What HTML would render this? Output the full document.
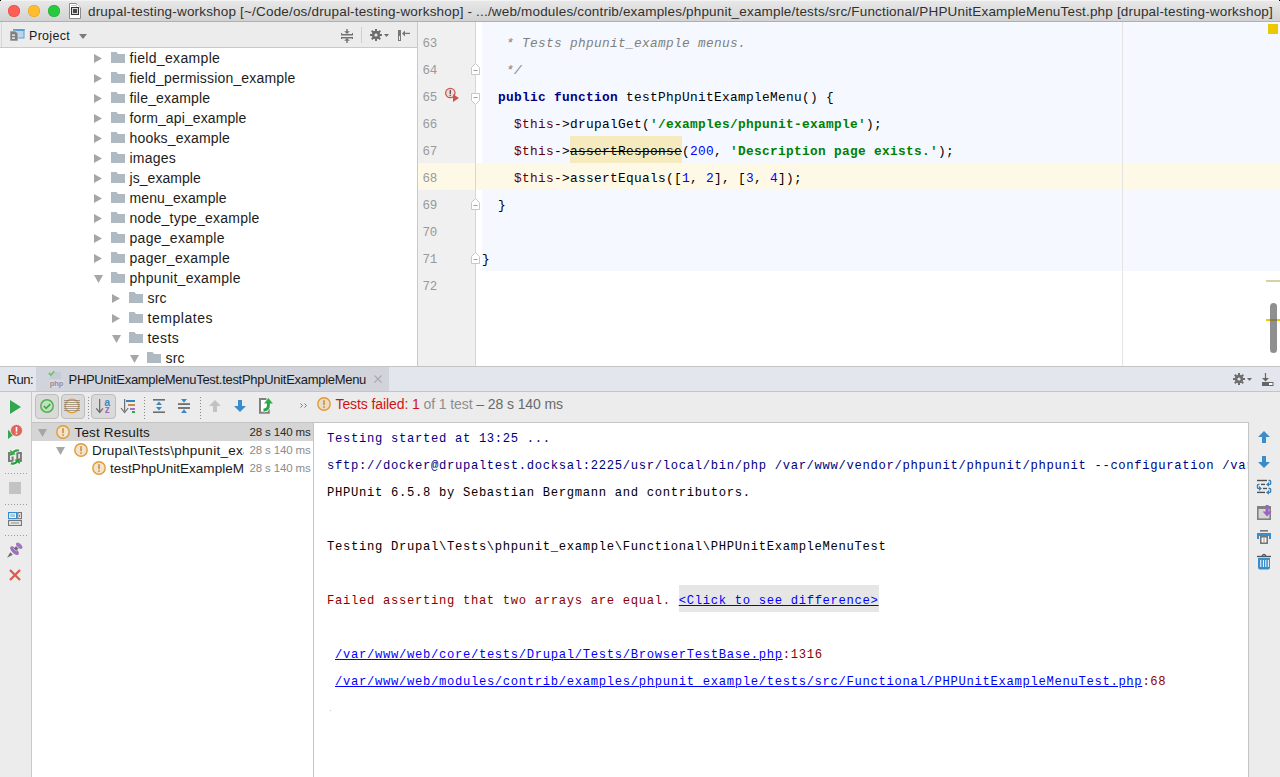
<!DOCTYPE html>
<html><head><meta charset="utf-8"><style>
*{box-sizing:border-box;margin:0;padding:0}
html,body{width:1280px;height:777px;overflow:hidden;background:#ececec;font-family:"Liberation Sans",sans-serif;color:#1a1a1a;position:relative}
.a{position:absolute}
svg{position:absolute;overflow:visible}
.mono{font-family:"Liberation Mono",monospace;white-space:pre}
.row{position:absolute;height:20px;line-height:20px;white-space:nowrap;color:#1c1c1c}
.ln{position:absolute;left:418px;width:19px;text-align:right;color:#999;font-family:"Liberation Mono",monospace;font-size:12.5px;letter-spacing:-0.3px;height:27px;line-height:32px}
.code{position:absolute;left:482px;height:27px;line-height:32px;color:#000;font-size:12.8px;letter-spacing:0.32px}
.cm{color:#808080;font-style:italic}
.kw{color:#000080;font-weight:bold}
.var{color:#660000}
.str{color:#008000;font-weight:bold}
.num{color:#0000ff}
.lnk{color:#0000ff;text-decoration:underline}
.cons{position:absolute;left:13px;height:27px;line-height:33px;color:#000;font-size:12.2px;letter-spacing:0.68px}
</style></head><body>
<div class="a" style="left:0px;top:0px;width:1280px;height:21px;background:linear-gradient(#e9e9e9,#d2d2d2);"></div>
<div class="a" style="left:0px;top:21px;width:1280px;height:1px;background:#b0b0b0;"></div>
<div class="a" style="left:0px;top:0px;width:1280px;height:1px;background:#f3f3f3;"></div>
<div class="a" style="left:0px;top:0px;width:1px;height:1px;background:#000;"></div>
<div class="a" style="left:1279px;top:0px;width:1px;height:1px;background:#000;"></div>
<div class="a" style="left:8px;top:5px;width:12px;height:12px;border-radius:50%;background:#fd5f57;box-shadow:inset 0 0 0 0.5px #e2463f"></div>
<div class="a" style="left:28px;top:5px;width:12px;height:12px;border-radius:50%;background:#febc2e;box-shadow:inset 0 0 0 0.5px #e1a116"></div>
<div class="a" style="left:48px;top:5px;width:12px;height:12px;border-radius:50%;background:#28c840;box-shadow:inset 0 0 0 0.5px #1aab29"></div>
<svg style="left:69px;top:3px" width="12" height="16" viewBox="0 0 12 16"><path d="M0.5 0.5H7.5L11.5 4.5V15.5H0.5Z" fill="#fff" stroke="#8c8c8c"/><path d="M7.5 0.5V4.5H11.5" fill="#fff" stroke="#c8c8c8" stroke-width="0.8"/><rect x="2" y="2" width="5" height="0.7" fill="#c0c0c0"/><rect x="2.5" y="4.5" width="7" height="7" fill="#d8d8d8" stroke="#333"/><rect x="4" y="6" width="4" height="4" fill="#484848"/></svg>
<div class="a" style="left:88px;top:1px;height:21px;line-height:21px;font-size:13.5px;color:#303030;white-space:pre;letter-spacing:0.178px">drupal-testing-workshop [~/Code/os/drupal-testing-workshop] - .../web/modules/contrib/examples/phpunit_example/tests/src/Functional/PHPUnitExampleMenuTest.php [drupal-testing-workshop]</div>
<div class="a" style="left:0px;top:22px;width:417px;height:25px;background:#ececec;"></div>
<div class="a" style="left:0px;top:47px;width:417px;height:1px;background:#c9c9c9;"></div>
<div class="a" style="left:1px;top:22px;width:1px;height:25px;background:#d6d6d6;"></div>
<svg style="left:10px;top:29px" width="15" height="13" viewBox="0 0 15 13"><rect x="3.5" y="0.5" width="10.5" height="8.5" fill="#b7d6ee" stroke="#5a9fd0"/><rect x="3" y="0" width="11.5" height="2" fill="#5a9fd0"/><path d="M0 2h5.5l2.5 2.5v7.5h-8z" fill="#808080" stroke="#ececec" stroke-width="0.6"/><rect x="2" y="5.5" width="3" height="1.2" fill="#fff"/><rect x="2" y="8.5" width="3" height="1.2" fill="#fff"/></svg>
<div class="a" style="left:29px;top:24px;height:25px;line-height:25px;font-size:12.5px;color:#1a1a1a;white-space:pre;letter-spacing:0.299px">Project</div>
<svg style="left:79px;top:34px" width="8" height="5" viewBox="0 0 8 5"><path d="M0 0h8l-4 5z" fill="#7a7a7a"/></svg>
<svg style="left:341px;top:29px" width="12" height="14" viewBox="0 0 12 14"><g fill="#727272"><rect x="0" y="5" width="12" height="1.5"/><rect x="0" y="8" width="12" height="1.5"/><rect x="5.3" y="0" width="1.4" height="4"/><path d="M3.2 2.3h5.6l-2.8 2.7z"/><rect x="5.3" y="10" width="1.4" height="4"/><path d="M3.2 11.7h5.6l-2.8-2.7z"/><rect x="0" y="4" width="1" height="2"/><rect x="11" y="4" width="1" height="2"/><rect x="0" y="8" width="1" height="2"/><rect x="11" y="8" width="1" height="2"/></g></svg>
<div class="a" style="left:361px;top:27px;width:1px;height:16px;background:#cfcfcf;"></div>
<svg style="left:370px;top:29px" width="20" height="12" viewBox="0 0 20 12"><g fill="#6e6e6e"><circle cx="6" cy="6" r="4.2"/><rect x="5" y="0" width="2" height="12"/><rect x="0" y="5" width="12" height="2"/><rect x="5" y="0" width="2" height="12" transform="rotate(45 6 6)"/><rect x="5" y="0" width="2" height="12" transform="rotate(-45 6 6)"/></g><circle cx="6" cy="6" r="1.6" fill="#ececec"/><path d="M14 5h5l-2.5 3z" fill="#6e6e6e"/></svg>
<svg style="left:398px;top:30px" width="12" height="11" viewBox="0 0 12 11"><rect x="0" y="0" width="3" height="11" fill="#777"/><rect x="1" y="6" width="1" height="4" fill="#ececec"/><rect x="5" y="2.75" width="7" height="1.3" fill="#777"/><path d="M4 3.4l3-3v6z" fill="#777"/></svg>
<div class="a" style="left:0px;top:48px;width:417px;height:318px;background:#fff;"></div>
<div class="a" style="left:0;top:48px;width:417px;height:318px;overflow:hidden">
<svg style="left:94px;top:6px" width="8" height="9" viewBox="0 0 8 9"><path d="M0 0l8 4.5-8 4.5z" fill="#a6a6a6"/></svg>
<svg style="left:111px;top:4px" width="14" height="11" viewBox="0 0 14 11"><path d="M0 0h5.5l1.5 2h7v9h-14z" fill="#aeb9c2"/></svg>
<div class="row" style="left:129.5px;top:0px;font-size:14px;letter-spacing:0.332px">field_example</div>
<svg style="left:94px;top:26px" width="8" height="9" viewBox="0 0 8 9"><path d="M0 0l8 4.5-8 4.5z" fill="#a6a6a6"/></svg>
<svg style="left:111px;top:24px" width="14" height="11" viewBox="0 0 14 11"><path d="M0 0h5.5l1.5 2h7v9h-14z" fill="#aeb9c2"/></svg>
<div class="row" style="left:129.5px;top:20px;font-size:14px;letter-spacing:0.172px">field_permission_example</div>
<svg style="left:94px;top:46px" width="8" height="9" viewBox="0 0 8 9"><path d="M0 0l8 4.5-8 4.5z" fill="#a6a6a6"/></svg>
<svg style="left:111px;top:44px" width="14" height="11" viewBox="0 0 14 11"><path d="M0 0h5.5l1.5 2h7v9h-14z" fill="#aeb9c2"/></svg>
<div class="row" style="left:129.5px;top:40px;font-size:14px;letter-spacing:0.183px">file_example</div>
<svg style="left:94px;top:66px" width="8" height="9" viewBox="0 0 8 9"><path d="M0 0l8 4.5-8 4.5z" fill="#a6a6a6"/></svg>
<svg style="left:111px;top:64px" width="14" height="11" viewBox="0 0 14 11"><path d="M0 0h5.5l1.5 2h7v9h-14z" fill="#aeb9c2"/></svg>
<div class="row" style="left:129.5px;top:60px;font-size:14px;letter-spacing:0.114px">form_api_example</div>
<svg style="left:94px;top:86px" width="8" height="9" viewBox="0 0 8 9"><path d="M0 0l8 4.5-8 4.5z" fill="#a6a6a6"/></svg>
<svg style="left:111px;top:84px" width="14" height="11" viewBox="0 0 14 11"><path d="M0 0h5.5l1.5 2h7v9h-14z" fill="#aeb9c2"/></svg>
<div class="row" style="left:129.5px;top:80px;font-size:14px;letter-spacing:0.188px">hooks_example</div>
<svg style="left:94px;top:106px" width="8" height="9" viewBox="0 0 8 9"><path d="M0 0l8 4.5-8 4.5z" fill="#a6a6a6"/></svg>
<svg style="left:111px;top:104px" width="14" height="11" viewBox="0 0 14 11"><path d="M0 0h5.5l1.5 2h7v9h-14z" fill="#aeb9c2"/></svg>
<div class="row" style="left:129.5px;top:100px;font-size:14px;letter-spacing:0.211px">images</div>
<svg style="left:94px;top:126px" width="8" height="9" viewBox="0 0 8 9"><path d="M0 0l8 4.5-8 4.5z" fill="#a6a6a6"/></svg>
<svg style="left:111px;top:124px" width="14" height="11" viewBox="0 0 14 11"><path d="M0 0h5.5l1.5 2h7v9h-14z" fill="#aeb9c2"/></svg>
<div class="row" style="left:129.5px;top:120px;font-size:14px;letter-spacing:0.049px">js_example</div>
<svg style="left:94px;top:146px" width="8" height="9" viewBox="0 0 8 9"><path d="M0 0l8 4.5-8 4.5z" fill="#a6a6a6"/></svg>
<svg style="left:111px;top:144px" width="14" height="11" viewBox="0 0 14 11"><path d="M0 0h5.5l1.5 2h7v9h-14z" fill="#aeb9c2"/></svg>
<div class="row" style="left:129.5px;top:140px;font-size:14px;letter-spacing:0.123px">menu_example</div>
<svg style="left:94px;top:166px" width="8" height="9" viewBox="0 0 8 9"><path d="M0 0l8 4.5-8 4.5z" fill="#a6a6a6"/></svg>
<svg style="left:111px;top:164px" width="14" height="11" viewBox="0 0 14 11"><path d="M0 0h5.5l1.5 2h7v9h-14z" fill="#aeb9c2"/></svg>
<div class="row" style="left:129.5px;top:160px;font-size:14px;letter-spacing:0.23px">node_type_example</div>
<svg style="left:94px;top:186px" width="8" height="9" viewBox="0 0 8 9"><path d="M0 0l8 4.5-8 4.5z" fill="#a6a6a6"/></svg>
<svg style="left:111px;top:184px" width="14" height="11" viewBox="0 0 14 11"><path d="M0 0h5.5l1.5 2h7v9h-14z" fill="#aeb9c2"/></svg>
<div class="row" style="left:129.5px;top:180px;font-size:14px;letter-spacing:0.288px">page_example</div>
<svg style="left:94px;top:206px" width="8" height="9" viewBox="0 0 8 9"><path d="M0 0l8 4.5-8 4.5z" fill="#a6a6a6"/></svg>
<svg style="left:111px;top:204px" width="14" height="11" viewBox="0 0 14 11"><path d="M0 0h5.5l1.5 2h7v9h-14z" fill="#aeb9c2"/></svg>
<div class="row" style="left:129.5px;top:200px;font-size:14px;letter-spacing:0.307px">pager_example</div>
<svg style="left:94px;top:227px" width="9" height="8" viewBox="0 0 9 8"><path d="M0 0h9l-4.5 8z" fill="#a6a6a6"/></svg>
<svg style="left:111px;top:224px" width="14" height="11" viewBox="0 0 14 11"><path d="M0 0h5.5l1.5 2h7v9h-14z" fill="#aeb9c2"/></svg>
<div class="row" style="left:129.5px;top:220px;font-size:14px;letter-spacing:0.311px">phpunit_example</div>
<svg style="left:112px;top:246px" width="8" height="9" viewBox="0 0 8 9"><path d="M0 0l8 4.5-8 4.5z" fill="#a6a6a6"/></svg>
<svg style="left:129px;top:244px" width="14" height="11" viewBox="0 0 14 11"><path d="M0 0h5.5l1.5 2h7v9h-14z" fill="#aeb9c2"/></svg>
<div class="row" style="left:147.5px;top:240px;font-size:14px;letter-spacing:0.179px">src</div>
<svg style="left:112px;top:266px" width="8" height="9" viewBox="0 0 8 9"><path d="M0 0l8 4.5-8 4.5z" fill="#a6a6a6"/></svg>
<svg style="left:129px;top:264px" width="14" height="11" viewBox="0 0 14 11"><path d="M0 0h5.5l1.5 2h7v9h-14z" fill="#aeb9c2"/></svg>
<div class="row" style="left:147.5px;top:260px;font-size:14px;letter-spacing:0.534px">templates</div>
<svg style="left:112px;top:287px" width="9" height="8" viewBox="0 0 9 8"><path d="M0 0h9l-4.5 8z" fill="#a6a6a6"/></svg>
<svg style="left:129px;top:284px" width="14" height="11" viewBox="0 0 14 11"><path d="M0 0h5.5l1.5 2h7v9h-14z" fill="#aeb9c2"/></svg>
<div class="row" style="left:147.5px;top:280px;font-size:14px;letter-spacing:0.427px">tests</div>
<svg style="left:130px;top:307px" width="9" height="8" viewBox="0 0 9 8"><path d="M0 0h9l-4.5 8z" fill="#a6a6a6"/></svg>
<svg style="left:147px;top:304px" width="14" height="11" viewBox="0 0 14 11"><path d="M0 0h5.5l1.5 2h7v9h-14z" fill="#aeb9c2"/></svg>
<div class="row" style="left:165.5px;top:300px;font-size:14px;letter-spacing:0.213px">src</div>
</div>
<div class="a" style="left:417px;top:22px;width:1px;height:344px;background:#c9c9c9;"></div>
<div class="a" style="left:418px;top:22px;width:57px;height:344px;background:#f0f0f0;"></div>
<div class="a" style="left:476px;top:22px;width:804px;height:344px;background:#fff;"></div>
<div class="a" style="left:482px;top:22px;width:798px;height:249px;background:#f5f8fe;"></div>
<div class="a" style="left:418px;top:163px;width:862px;height:27px;background:#fef9e6;"></div>
<div class="a" style="left:475px;top:22px;width:1px;height:344px;background:#d6d6d6;"></div>
<div class="a" style="left:570px;top:136px;width:112px;height:27px;background:#f5ebbf;"></div>
<div class="a" style="left:1122px;top:22px;width:1px;height:344px;background:#e3e3e3;"></div>
<div class="a" style="left:0;top:22px;width:1280px;height:344px;overflow:hidden">
<div class="ln" style="top:6px">63</div>
<div class="code mono" style="top:6px">   <span class="cm">* Tests phpunit_example menus.</span></div>
<div class="ln" style="top:33px">64</div>
<div class="code mono" style="top:33px">   <span class="cm">*/</span></div>
<div class="ln" style="top:60px">65</div>
<div class="code mono" style="top:60px">  <span class="kw">public function</span> testPhpUnitExampleMenu() {</div>
<div class="ln" style="top:87px">66</div>
<div class="code mono" style="top:87px">    <span class="var">$this</span>-&gt;drupalGet(<span class="str">'/examples/phpunit-example'</span>);</div>
<div class="ln" style="top:114px">67</div>
<div class="code mono" style="top:114px">    <span class="var">$this</span>-&gt;<s>assertResponse</s>(<span class="num">200</span>, <span class="str">'Description page exists.'</span>);</div>
<div class="ln" style="top:141px">68</div>
<div class="code mono" style="top:141px">    <span class="var">$this</span>-&gt;assertEquals([<span class="num">1</span>, <span class="num">2</span>], [<span class="num">3</span>, <span class="num">4</span>]);</div>
<div class="ln" style="top:168px">69</div>
<div class="code mono" style="top:168px">  }</div>
<div class="ln" style="top:195px">70</div>
<div class="code mono" style="top:195px"></div>
<div class="ln" style="top:222px">71</div>
<div class="code mono" style="top:222px">}</div>
<div class="ln" style="top:249px">72</div>
<div class="code mono" style="top:249px"></div>
<svg style="left:471px;top:41px" width="9" height="12" viewBox="0 0 9 12"><path d="M0.5 11.5v-7l4-4 4 4v7z" fill="#fff" stroke="#c8c8c8"/><rect x="2.5" y="7" width="4" height="1" fill="#a0a0a0"/></svg>
<svg style="left:471px;top:71px" width="9" height="12" viewBox="0 0 9 12"><path d="M0.5 0.5h8v7l-4 4-4-4z" fill="#fff" stroke="#c8c8c8"/><rect x="2.5" y="4" width="4" height="1" fill="#a0a0a0"/></svg>
<svg style="left:471px;top:176px" width="9" height="12" viewBox="0 0 9 12"><path d="M0.5 11.5v-7l4-4 4 4v7z" fill="#fff" stroke="#c8c8c8"/><rect x="2.5" y="7" width="4" height="1" fill="#a0a0a0"/></svg>
<svg style="left:471px;top:230px" width="9" height="12" viewBox="0 0 9 12"><path d="M0.5 11.5v-7l4-4 4 4v7z" fill="#fff" stroke="#c8c8c8"/><rect x="2.5" y="7" width="4" height="1" fill="#a0a0a0"/></svg>
<svg style="left:445px;top:65px" width="15" height="16" viewBox="0 0 15 16"><circle cx="5.3" cy="6" r="4.7" fill="#f1d9d6" stroke="#c9564b" stroke-width="1.2"/><rect x="4.6" y="3" width="1.3" height="4" fill="#555"/><rect x="4.6" y="7.8" width="1.3" height="1.3" fill="#555"/><path d="M8 7.2L14 11 8 15z" fill="#c9564b"/></svg>
</div>
<div class="a" style="left:1268px;top:24px;width:10px;height:10px;background:#ecc800;"></div>
<div class="a" style="left:1266px;top:280px;width:14px;height:2px;background:#d9cfa9;"></div>
<div class="a" style="left:1266px;top:319px;width:14px;height:2px;background:#ecc800;"></div>
<div class="a" style="left:1270px;top:303px;width:7px;height:50px;background:rgba(90,90,90,0.68);border-radius:4px"></div>
<div class="a" style="left:0px;top:366px;width:1280px;height:1px;background:#c4c4c4;"></div>
<div class="a" style="left:0px;top:367px;width:1280px;height:24px;background:#e3e6ec;"></div>
<div class="a" style="left:36px;top:367px;width:353px;height:24px;background:#d1d4da;"></div>
<div class="a" style="left:0px;top:391px;width:1280px;height:1px;background:#c4c4c4;"></div>
<div class="a" style="left:7.5px;top:367px;height:24px;line-height:24px;font-size:13px;color:#1a1a1a;white-space:pre;letter-spacing:-0.49px;line-height:25px">Run:</div>
<svg style="left:48px;top:370px" width="16" height="18" viewBox="0 0 16 18"><rect x="2" y="2" width="11" height="7" fill="#c4ccd4"/><path d="M0.8 3l2 2.2 3.5-4" fill="none" stroke="#6ac259" stroke-width="1.5"/><rect x="1" y="10" width="15" height="7" fill="#dcd6ea"/><text x="8.5" y="16" font-size="7.5" text-anchor="middle" fill="#8f8f8f" font-family="Liberation Sans" font-weight="bold">php</text></svg>
<div class="a" style="left:68.5px;top:367px;height:24px;line-height:24px;font-size:13px;color:#1a1a1a;white-space:pre;letter-spacing:-0.293px;line-height:25px">PHPUnitExampleMenuTest.testPhpUnitExampleMenu</div>
<svg style="left:374px;top:375px" width="8" height="8" viewBox="0 0 8 8"><path d="M0.5 0.5l7 7M7.5 0.5l-7 7" stroke="#aaaaaa" stroke-width="1.1"/></svg>
<svg style="left:1233px;top:373px" width="20" height="12" viewBox="0 0 20 12"><g fill="#6e6e6e"><circle cx="6" cy="6" r="4.2"/><rect x="5" y="0" width="2" height="12"/><rect x="0" y="5" width="12" height="2"/><rect x="5" y="0" width="2" height="12" transform="rotate(45 6 6)"/><rect x="5" y="0" width="2" height="12" transform="rotate(-45 6 6)"/></g><circle cx="6" cy="6" r="1.6" fill="#e3e6ec"/><path d="M14 5h5l-2.5 3z" fill="#6e6e6e"/></svg>
<svg style="left:1262px;top:373px" width="12" height="13" viewBox="0 0 12 13"><rect x="2.9" y="0" width="1.2" height="7" fill="#666"/><path d="M0 5h7l-3.5 3.5z" fill="#666"/><rect x="0.5" y="9.5" width="10.5" height="3" fill="#fff" stroke="#666"/><rect x="1" y="10" width="6" height="2" fill="#666"/></svg>
<div class="a" style="left:0px;top:392px;width:1280px;height:30px;background:#ececec;"></div>
<div class="a" style="left:0px;top:422px;width:1280px;height:355px;background:#ececec;"></div>
<div class="a" style="left:31px;top:392px;width:1px;height:385px;background:#c9c9c9;"></div>
<div class="a" style="left:32px;top:422px;width:1216px;height:1px;background:#c4c4c4;"></div>
<div class="a" style="left:35px;top:394px;width:24px;height:25px;background:#dadada;border:1px solid #bdbdbd;border-radius:4px"></div>
<div class="a" style="left:60.5px;top:394px;width:24px;height:25px;background:#dadada;border:1px solid #bdbdbd;border-radius:4px"></div>
<div class="a" style="left:91px;top:394px;width:25px;height:25px;background:#dadada;border:1px solid #bdbdbd;border-radius:4px"></div>
<svg style="left:40px;top:399px" width="14" height="14" viewBox="0 0 14 14"><circle cx="7" cy="7" r="6.2" fill="#c5dfc5" stroke="#4fb350" stroke-width="1.5"/><path d="M3.8 7l2.3 2.4 4.2-4.3" fill="none" stroke="#3ea93f" stroke-width="1.6"/></svg>
<svg style="left:64px;top:398px" width="16" height="16" viewBox="0 0 16 16"><circle cx="8" cy="8" r="6.8" fill="#f3e6d0" stroke="#e8a33a" stroke-width="1.5"/><g fill="#7d6e5c" opacity="0.6"><rect x="0" y="2" width="16" height="1"/><rect x="0" y="4" width="16" height="1"/><rect x="0" y="6" width="16" height="1"/><rect x="0" y="8" width="16" height="1"/><rect x="0" y="10" width="16" height="1"/><rect x="0" y="12" width="16" height="1"/></g></svg>
<svg style="left:88px;top:397px" width="1" height="24" viewBox="0 0 1 24"><rect x="0" y="0" width="1" height="1" fill="#8a8a8a"/><rect x="0" y="3" width="1" height="1" fill="#8a8a8a"/><rect x="0" y="6" width="1" height="1" fill="#8a8a8a"/><rect x="0" y="9" width="1" height="1" fill="#8a8a8a"/><rect x="0" y="12" width="1" height="1" fill="#8a8a8a"/><rect x="0" y="15" width="1" height="1" fill="#8a8a8a"/><rect x="0" y="18" width="1" height="1" fill="#8a8a8a"/><rect x="0" y="21" width="1" height="1" fill="#8a8a8a"/></svg>
<svg style="left:96px;top:399px" width="14" height="15" viewBox="0 0 14 15"><rect x="3" y="0" width="1.3" height="13" fill="#6e6e6e"/><path d="M0.3 9.3l3.35 4.2 3.35-4.2" fill="none" stroke="#6e6e6e" stroke-width="1.3"/><text x="11.2" y="7" font-size="10.5" text-anchor="middle" fill="#3a88c4" font-family="Liberation Sans" font-weight="bold">a</text><text x="11.2" y="14.3" font-size="10" text-anchor="middle" fill="#9a6cc0" font-family="Liberation Sans" font-weight="bold">z</text></svg>
<svg style="left:121px;top:399px" width="15" height="14" viewBox="0 0 15 14"><rect x="3" y="0" width="1.2" height="12" fill="#6e6e6e"/><path d="M0 9l3.6 4.5 3.6-4.5" fill="none" stroke="#6e6e6e" stroke-width="1.2"/><rect x="5" y="1" width="9" height="2" fill="#3a80bb"/><rect x="7" y="5" width="7" height="2" fill="#c98d43"/><rect x="9" y="9" width="5" height="2" fill="#a46fcb"/><rect x="11" y="12" width="3" height="2" fill="#2eaa4a"/></svg>
<svg style="left:144px;top:397px" width="1" height="24" viewBox="0 0 1 24"><rect x="0" y="0" width="1" height="1" fill="#8a8a8a"/><rect x="0" y="3" width="1" height="1" fill="#8a8a8a"/><rect x="0" y="6" width="1" height="1" fill="#8a8a8a"/><rect x="0" y="9" width="1" height="1" fill="#8a8a8a"/><rect x="0" y="12" width="1" height="1" fill="#8a8a8a"/><rect x="0" y="15" width="1" height="1" fill="#8a8a8a"/><rect x="0" y="18" width="1" height="1" fill="#8a8a8a"/><rect x="0" y="21" width="1" height="1" fill="#8a8a8a"/></svg>
<svg style="left:153px;top:399px" width="12" height="14" viewBox="0 0 12 14"><rect x="0" y="0" width="12" height="1.6" fill="#6e6e6e"/><rect x="0" y="12.4" width="12" height="1.6" fill="#6e6e6e"/><path d="M3 6h6l-3-3.6z" fill="#3a89c5"/><path d="M3 8h6l-3 3.6z" fill="#3a89c5"/></svg>
<svg style="left:178px;top:399px" width="12" height="14" viewBox="0 0 12 14"><rect x="0" y="4.2" width="12" height="1.8" fill="#6e6e6e"/><rect x="0" y="8.1" width="12" height="1.8" fill="#6e6e6e"/><path d="M3 0h6l-3 3.8z" fill="#3a89c5"/><path d="M3 14h6l-3-3.8z" fill="#3a89c5"/></svg>
<svg style="left:200px;top:397px" width="1" height="24" viewBox="0 0 1 24"><rect x="0" y="0" width="1" height="1" fill="#8a8a8a"/><rect x="0" y="3" width="1" height="1" fill="#8a8a8a"/><rect x="0" y="6" width="1" height="1" fill="#8a8a8a"/><rect x="0" y="9" width="1" height="1" fill="#8a8a8a"/><rect x="0" y="12" width="1" height="1" fill="#8a8a8a"/><rect x="0" y="15" width="1" height="1" fill="#8a8a8a"/><rect x="0" y="18" width="1" height="1" fill="#8a8a8a"/><rect x="0" y="21" width="1" height="1" fill="#8a8a8a"/></svg>
<svg style="left:209px;top:400px" width="12" height="12" viewBox="0 0 12 12"><path d="M6 0l6 6h-4v6h-4v-6h-4z" fill="#c2c2c2"/></svg>
<svg style="left:234px;top:400px" width="12" height="12" viewBox="0 0 12 12" transform="rotate(180)"><path d="M6 0l6 6h-4v6h-4v-6h-4z" fill="#3a8ccb"/></svg>
<svg style="left:259px;top:398px" width="15" height="16" viewBox="0 0 15 16"><rect x="1" y="1" width="9.8" height="13.8" fill="#fff"/><path d="M1 15.8V1H7.5M9.8 10.5V14.8H1" fill="none" stroke="#808080" stroke-width="2"/><path d="M9.4 4V7.5Q9.4 11.6 4.5 12.2" fill="none" stroke="#fff" stroke-width="4.5"/><path d="M5 5.6L9.4 0 13.9 5.6z" fill="#2fae4a"/><path d="M9.4 4V7.5Q9.4 11.6 4.5 12.2" fill="none" stroke="#2aa745" stroke-width="3"/></svg>
<svg style="left:300px;top:403px" width="8" height="5" viewBox="0 0 8 5"><path d="M0.5 0.5l2 2-2 2M4.5 0.5l2 2-2 2" fill="none" stroke="#777" stroke-width="1"/></svg>
<svg style="left:317px;top:397px" width="14" height="14" viewBox="0 0 14 14"><circle cx="7" cy="7" r="6.2" fill="#ecdcc6" stroke="#e09b34" stroke-width="1.4"/><rect x="6.2" y="3.2" width="1.6" height="5" fill="#c29245"/><rect x="6.2" y="9.3" width="1.6" height="1.6" fill="#c29245"/></svg>
<div class="a" style="left:335.5px;top:389px;height:30px;line-height:31px;font-size:14px;white-space:pre;letter-spacing:-0.093px"><span style="color:#cc1414">Tests failed: 1</span><span style="color:#8e8e8e"> of 1 test</span><span style="color:#6a6a6a"> – 28 s 140 ms</span></div>
<svg style="left:10px;top:400px" width="11" height="14" viewBox="0 0 11 14"><path d="M0 0l11 7-11 7z" fill="#2fa84f"/></svg>
<svg style="left:8px;top:424px" width="14" height="16" viewBox="0 0 14 16"><path d="M0 6l6 4.5-6 4.5z" fill="#2fa84f"/><circle cx="8.5" cy="6.5" r="6" fill="#e2655c" stroke="#ececec" stroke-width="0.8"/><rect x="7.7" y="3" width="1.6" height="4.6" fill="#fff"/><rect x="7.7" y="8.6" width="1.6" height="1.6" fill="#fff"/></svg>
<svg style="left:8px;top:449px" width="14" height="16" viewBox="0 0 14 16"><path d="M1 3V12H4.6V7.5M9.3 10V4H12.9V13" fill="none" stroke="#7a7a7a" stroke-width="2"/><path d="M11 1.6Q6.5 0.5 4.5 4.5" fill="none" stroke="#fff" stroke-width="3.6"/><path d="M11 1.6Q6.5 0.5 4.5 4.5" fill="none" stroke="#35a94a" stroke-width="2.2"/><path d="M2 6.8L2.3 0.8 7.6 5.2z" fill="#35a94a"/><path d="M3 14.4Q7.5 15.5 9.5 11.5" fill="none" stroke="#fff" stroke-width="3.6"/><path d="M3 14.4Q7.5 15.5 9.5 11.5" fill="none" stroke="#2a9e3f" stroke-width="2.2"/><path d="M12 9.2L11.7 15.2 6.4 10.8z" fill="#2a9e3f"/></svg>
<svg style="left:5px;top:473px" width="24" height="1" viewBox="0 0 24 1"><rect x="0" y="0" width="1" height="1" fill="#9a9a9a"/><rect x="3" y="0" width="1" height="1" fill="#9a9a9a"/><rect x="6" y="0" width="1" height="1" fill="#9a9a9a"/><rect x="9" y="0" width="1" height="1" fill="#9a9a9a"/><rect x="12" y="0" width="1" height="1" fill="#9a9a9a"/><rect x="15" y="0" width="1" height="1" fill="#9a9a9a"/><rect x="18" y="0" width="1" height="1" fill="#9a9a9a"/><rect x="21" y="0" width="1" height="1" fill="#9a9a9a"/></svg>
<div class="a" style="left:9px;top:482px;width:12px;height:12px;background:#c3c3c3;"></div>
<svg style="left:5px;top:504px" width="24" height="1" viewBox="0 0 24 1"><rect x="0" y="0" width="1" height="1" fill="#9a9a9a"/><rect x="3" y="0" width="1" height="1" fill="#9a9a9a"/><rect x="6" y="0" width="1" height="1" fill="#9a9a9a"/><rect x="9" y="0" width="1" height="1" fill="#9a9a9a"/><rect x="12" y="0" width="1" height="1" fill="#9a9a9a"/><rect x="15" y="0" width="1" height="1" fill="#9a9a9a"/><rect x="18" y="0" width="1" height="1" fill="#9a9a9a"/><rect x="21" y="0" width="1" height="1" fill="#9a9a9a"/></svg>
<svg style="left:8px;top:512px" width="14" height="14" viewBox="0 0 14 14"><rect x="0.6" y="0.6" width="8" height="6" fill="#fff" stroke="#3a8ccb" stroke-width="1.2"/><rect x="2.2" y="2.2" width="4.8" height="2.8" fill="#9ccbea"/><rect x="9.8" y="0.6" width="3.6" height="6" fill="#fff" stroke="#777" stroke-width="1.2"/><rect x="11.1" y="2.5" width="1" height="2.5" fill="#777"/><rect x="0.6" y="8.6" width="12.8" height="4.8" fill="#fff" stroke="#777" stroke-width="1.2"/><rect x="2.5" y="10.5" width="9" height="1" fill="#777"/></svg>
<svg style="left:5px;top:535px" width="24" height="1" viewBox="0 0 24 1"><rect x="0" y="0" width="1" height="1" fill="#9a9a9a"/><rect x="3" y="0" width="1" height="1" fill="#9a9a9a"/><rect x="6" y="0" width="1" height="1" fill="#9a9a9a"/><rect x="9" y="0" width="1" height="1" fill="#9a9a9a"/><rect x="12" y="0" width="1" height="1" fill="#9a9a9a"/><rect x="15" y="0" width="1" height="1" fill="#9a9a9a"/><rect x="18" y="0" width="1" height="1" fill="#9a9a9a"/><rect x="21" y="0" width="1" height="1" fill="#9a9a9a"/></svg>
<svg style="left:6px;top:541px" width="17" height="18" viewBox="0 0 17 18"><path d="M1.1 16.7L4.3 11.2 6.8 13.7z" fill="#6e6e6e"/><ellipse cx="8.5" cy="9.6" rx="5.6" ry="2.6" transform="rotate(45 8.5 9.6)" fill="#9c6cc2"/><ellipse cx="13.2" cy="4.8" rx="3.9" ry="2.1" transform="rotate(45 13.2 4.8)" fill="#a274c6"/><rect x="8.2" y="5.6" width="3.8" height="3.8" transform="rotate(45 10.1 7.5)" fill="#6e6e6e" stroke="#ececec" stroke-width="0.6"/></svg>
<svg style="left:9px;top:569px" width="12" height="12" viewBox="0 0 12 12"><path d="M1 1l10 10M11 1l-10 10" stroke="#e0584c" stroke-width="2.2"/></svg>
<svg style="left:1258px;top:431px" width="12" height="12" viewBox="0 0 12 12"><path d="M6 0l6 6h-4v6h-4v-6h-4z" fill="#3a8ccb"/></svg>
<svg style="left:1258px;top:456px" width="12" height="12" viewBox="0 0 12 12"><path d="M6 12l6-6h-4v-6h-4v6h-4z" fill="#3a8ccb"/></svg>
<svg style="left:1256px;top:479px" width="16" height="18" viewBox="0 0 16 18"><g fill="#505050"><rect x="1" y="0.8" width="10" height="1.4"/><rect x="5" y="4.7" width="4" height="1.4"/><rect x="7" y="8.8" width="4" height="1.4"/><rect x="1" y="12.7" width="8" height="1.4"/></g><g fill="none" stroke="#3580b8" stroke-width="1.4"><path d="M12.5 1.5H13.6Q14.6 1.5 14.6 2.5V4.4Q14.6 5.4 13.6 5.4H12"/><path d="M3.5 5.4H2.5Q1.5 5.4 1.5 6.4V8.5Q1.5 9.5 2.5 9.5H4"/><path d="M12.5 9.5H13.6Q14.6 9.5 14.6 10.5V12.4Q14.6 13.4 13.6 13.4H12"/></g><g fill="#3580b8"><path d="M10 5.4L13 3 13 7.8z"/><path d="M6 9.5L3 7.1 3 11.9z"/><path d="M10 13.4L13 11 13 15.8z"/></g></svg>
<svg style="left:1257px;top:505px" width="15" height="15" viewBox="0 0 15 15"><rect x="0.8" y="1.8" width="12.4" height="12.4" fill="#d6d6d6" stroke="#808080" stroke-width="1.6"/><rect x="0" y="1" width="14" height="3" fill="#808080"/><rect x="8.6" y="0" width="3" height="7" fill="#9b62bf"/><path d="M5.6 6.5h9l-4.5 5z" fill="#9b62bf"/></svg>
<svg style="left:1257px;top:530px" width="14" height="14" viewBox="0 0 14 14"><rect x="3" y="0" width="8" height="1.6" fill="#777"/><path d="M0 3h14v6h-2v-3h-10v3h-2z" fill="#3a8ccb"/><rect x="3.8" y="6.8" width="6.4" height="6.4" fill="#fff" stroke="#777" stroke-width="1.6"/><rect x="6.2" y="8.5" width="1.6" height="1" fill="#777"/><rect x="6.2" y="10.5" width="1.6" height="1" fill="#777"/></svg>
<svg style="left:1257px;top:553px" width="14" height="17" viewBox="0 0 14 17"><path d="M0 3.5h14" stroke="#555" stroke-width="1.4"/><path d="M5 2.8q2-2.6 4 0" fill="none" stroke="#555" stroke-width="1.3"/><path d="M1 5h12v9.5q0 2-2 2h-8q-2 0-2-2z" fill="#3a8ccb"/><g fill="#fff"><rect x="3.3" y="7" width="1" height="7"/><rect x="5.9" y="7" width="1" height="7"/><rect x="8.3" y="7" width="1" height="7"/><rect x="10.8" y="7" width="1" height="7"/></g></svg>
<div class="a" style="left:32px;top:423px;width:281px;height:354px;background:#fff;"></div>
<div class="a" style="left:32px;top:423px;width:281px;height:18px;background:#d5d5d5;"></div>
<div class="a" style="left:313px;top:422px;width:1px;height:355px;background:#c4c4c4;"></div>
<div class="a" style="left:314px;top:423px;width:934px;height:354px;background:#fff;"></div>
<div class="a" style="left:1248px;top:422px;width:1px;height:355px;background:#c4c4c4;"></div>
<svg style="left:38px;top:429px" width="9" height="8" viewBox="0 0 9 8"><path d="M0 0h9l-4.5 8z" fill="#a6a6a6"/></svg>
<svg style="left:56px;top:425px" width="14" height="14" viewBox="0 0 14 14"><circle cx="7" cy="7" r="6.2" fill="#f2e3cf" stroke="#e09b34" stroke-width="1.4"/><rect x="6.2" y="3.2" width="1.6" height="5" fill="#c29245"/><rect x="6.2" y="9.3" width="1.6" height="1.6" fill="#c29245"/></svg>
<div class="a" style="left:74.5px;top:423px;height:18px;line-height:18px;font-size:13.5px;color:#1a1a1a;white-space:pre;letter-spacing:0.165px;line-height:19px">Test Results</div>
<div class="a" style="left:249.5px;top:423px;height:18px;line-height:18px;font-size:11.5px;color:#2a2a2a;white-space:pre;letter-spacing:-0.149px;line-height:19px">28 s 140 ms</div>
<svg style="left:56px;top:447px" width="9" height="8" viewBox="0 0 9 8"><path d="M0 0h9l-4.5 8z" fill="#a6a6a6"/></svg>
<svg style="left:74px;top:443px" width="14" height="14" viewBox="0 0 14 14"><circle cx="7" cy="7" r="6.2" fill="#f2e3cf" stroke="#e09b34" stroke-width="1.4"/><rect x="6.2" y="3.2" width="1.6" height="5" fill="#c29245"/><rect x="6.2" y="9.3" width="1.6" height="1.6" fill="#c29245"/></svg>
<div class="a" style="left:92px;top:441px;width:152px;height:18px;overflow:hidden;white-space:nowrap;font-size:13.5px;line-height:19px;color:#1a1a1a;letter-spacing:0.268px">Drupal\Tests\phpunit_example\Functional</div>
<div class="a" style="left:249.5px;top:441px;height:18px;line-height:18px;font-size:11.5px;color:#8c8c8c;white-space:pre;letter-spacing:-0.149px;line-height:19px">28 s 140 ms</div>
<svg style="left:92px;top:461px" width="14" height="14" viewBox="0 0 14 14"><circle cx="7" cy="7" r="6.2" fill="#f2e3cf" stroke="#e09b34" stroke-width="1.4"/><rect x="6.2" y="3.2" width="1.6" height="5" fill="#c29245"/><rect x="6.2" y="9.3" width="1.6" height="1.6" fill="#c29245"/></svg>
<div class="a" style="left:110px;top:459px;width:134px;height:18px;overflow:hidden;white-space:nowrap;font-size:13.5px;line-height:19px;color:#1a1a1a;letter-spacing:0.023px">testPhpUnitExampleMenu</div>
<div class="a" style="left:249.5px;top:459px;height:18px;line-height:18px;font-size:11.5px;color:#8c8c8c;white-space:pre;letter-spacing:-0.149px;line-height:19px">28 s 140 ms</div>
<div class="a" style="left:314px;top:423px;width:934px;height:354px;overflow:hidden">
<div class="cons mono" style="top:0px"><span style="color:#000080">Testing started at 13:25 ...</span></div>
<div class="cons mono" style="top:27px"><span style="color:#000080">sftp://docker@drupaltest.docksal:2225/usr/local/bin/php /var/www/vendor/phpunit/phpunit/phpunit --configuration /var/www/web/core/phpunit.xml</span></div>
<div class="cons mono" style="top:54px">PHPUnit 6.5.8 by Sebastian Bergmann and contributors.</div>
<div class="cons mono" style="top:108px">Testing Drupal\Tests\phpunit_example\Functional\PHPUnitExampleMenuTest</div>
<div class="cons mono" style="top:162px"><span style="color:#8b0000">Failed asserting that two arrays are equal. </span><span class="lnk" style="background:#e6e6e6;display:inline-block;height:27px;width:200px">&lt;Click to see difference&gt;</span></div>
<div class="cons mono" style="top:216px"> <span class="lnk">/var/www/web/core/tests/Drupal/Tests/BrowserTestBase.php</span><span style="color:#8b0000">:1316</span></div>
<div class="cons mono" style="top:243px"> <span class="lnk">/var/www/web/modules/contrib/examples/phpunit_example/tests/src/Functional/PHPUnitExampleMenuTest.php</span><span style="color:#8b0000">:68</span></div>
<div class="a" style="left:16px;top:287px;width:1px;height:1px;background:#c8c8c8;"></div>
</div>
</body></html>
